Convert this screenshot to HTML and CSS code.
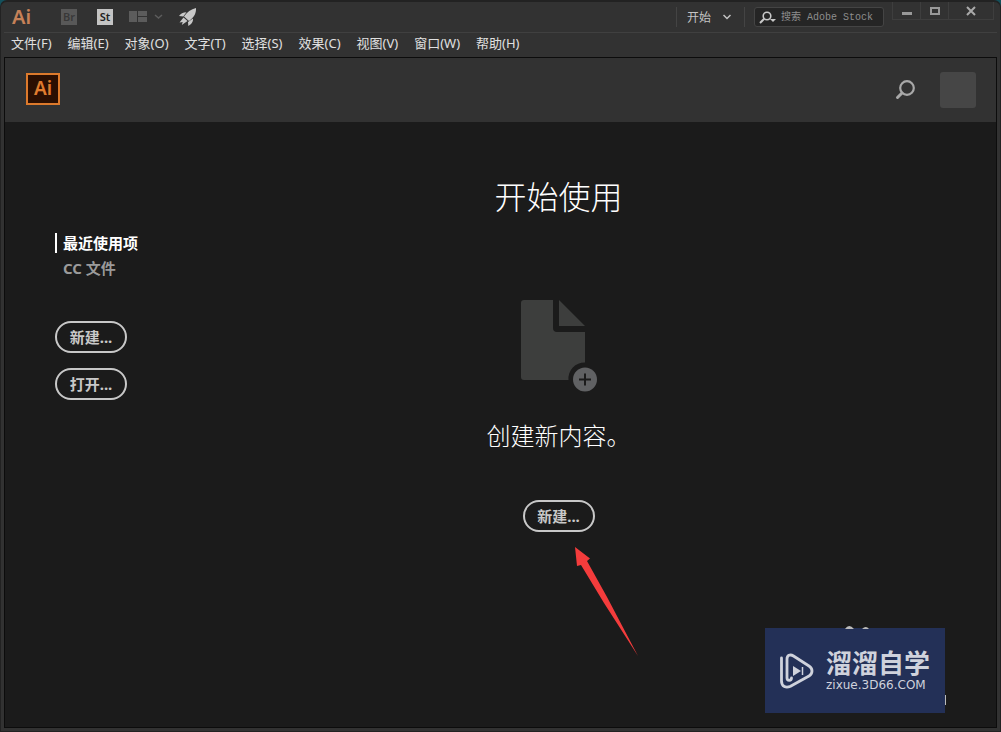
FILE: index.html
```html
<!DOCTYPE html>
<html lang="zh-CN">
<head>
  <meta charset="UTF-8">
  <title>Ai</title>
  <meta name="viewport" content="width=device-width, initial-scale=1.0">
  <link rel="stylesheet" href="styles.css">
</head>
<body>

<div class="window">

  <!-- Title bar -->
  <header class="titlebar">
    <span class="app-name">Ai</span>
    <button class="bridge" disabled>Br</button>
    <button class="stock">St</button>
    <button class="arrange" aria-label="排列文档">
      <svg width="34" height="12" viewBox="0 0 34 12">
        <path fill="#5c5c5c" d="M0 0h8v11H0zM9 0h9v5H9zM9 6h9v5H9z"/>
        <path fill="none" stroke="#5c5c5c" stroke-width="1.5" d="M26 4l3.500 3 3.500-3"/>
      </svg>
    </button>
    <button class="rocket" aria-label="GPU 性能">
      <svg width="18" height="18" viewBox="0 0 18 18">
        <path fill="#c8c8c8" d="M17 0c.3 5-1.600 9-7 13L5 8.500C8 4 12 1.200 17 0zM7.500 4.200L4.300 8.500 0 8C1.500 5.600 4 4.200 7.500 4.200zM14 10.500c.4 3-1.500 6-4.700 7.500l-.3-4zM4.500 9.500l4 3.500-5.700 4 .9-3-3.200.6z"/>
      </svg>
    </button>

    <button class="workspace">
      开始
      <svg width="8" height="6" viewBox="0 0 8 6"><path fill="none" stroke="#c4c4c4" stroke-width="1.500" d="M.5 1L4 4.500 7.500 1"/></svg>
    </button>
    <label class="stock-search">
      <svg width="18" height="13" viewBox="0 0 18 13">
        <circle cx="8" cy="5" r="3.800" fill="none" stroke="#c8c8c8" stroke-width="1.600"/>
        <path stroke="#c8c8c8" stroke-width="2" d="M5.200 7.800L1 12"/>
        <path fill="#c8c8c8" d="M11 8h6l-3 3z"/>
      </svg>
      <input type="text" placeholder="搜索 Adobe Stock" aria-label="搜索 Adobe Stock">
    </label>
    <div class="window-controls">
      <button aria-label="最小化"><svg width="10" height="10" viewBox="0 0 10 10"><path fill="#999" d="M0 6h10v3H0z"/></svg></button>
      <button aria-label="最大化"><svg width="10" height="10" viewBox="0 0 10 10"><path fill="none" stroke="#999" stroke-width="2" d="M1 2h8v6H1z"/></svg></button>
      <button class="close" aria-label="关闭"><svg width="10" height="10" viewBox="0 0 10 10"><path stroke="#aaa" stroke-width="2" d="M1 1l8 8M9 1L1 9"/></svg></button>
    </div>
  </header>

  <!-- Menu bar -->
  <nav class="menubar">
    <button>文件(F)</button>
    <button>编辑(E)</button>
    <button>对象(O)</button>
    <button>文字(T)</button>
    <button>选择(S)</button>
    <button>效果(C)</button>
    <button>视图(V)</button>
    <button>窗口(W)</button>
    <button>帮助(H)</button>
  </nav>

  <!-- Start workspace -->
  <div class="frame">
    <div class="topbar">
      <span class="logo">Ai</span>
      <button class="search" aria-label="搜索">
        <svg width="20" height="20" viewBox="0 0 20 20">
          <circle cx="12" cy="8" r="6.800" fill="none" stroke="#a8a8a8" stroke-width="2.200"/>
          <path stroke="#a8a8a8" stroke-width="3" stroke-linecap="round" d="M7 13l-4.500 4.500"/>
        </svg>
      </button>
      <button class="avatar" aria-label="帐户"></button>
    </div>

    <div class="content">
      <aside class="sidebar">
        <a href="#" class="tab active">最近使用项</a>
        <a href="#" class="tab">CC 文件</a>
        <div class="actions">
          <button class="pill">新建...</button>
          <button class="pill">打开...</button>
        </div>
      </aside>

      <main class="start">
        <h1>开始使用</h1>
        <svg class="new-file" width="76" height="92" viewBox="0 0 76 92">
          <path fill="#3d3e3d" d="M3 0h29v28q0 4 4 4h28v30.500A16 16 0 0 0 47.500 80H3q-3 0-3-3V3q0-3 3-3z"/>
          <path fill="#3d3e3d" d="M38 0l26 26H38z"/>
          <circle cx="64" cy="79.500" r="12" fill="#606163"/>
          <path stroke="#1b1b1b" stroke-width="2" d="M64 73.500v12M58 79.500h12"/>
        </svg>
        <p>创建新内容。</p>
        <div class="create">
          <button class="pill">新建...</button>
          <svg class="pointer" width="64" height="110" viewBox="0 0 64 110">
            <path fill="#f43c3c" d="M0 0l15 11.500-3 2.500 20 36 31 59-34-53L6 18l-4 1z"/>
          </svg>
        </div>
      </main>
    </div>
  </div>

  <div class="watermark">
    <svg width="34" height="36" viewBox="0 0 34 36">
      <path fill="none" stroke="#cfd2dc" stroke-width="2.800" stroke-linecap="round" stroke-linejoin="round" d="M1.500 5v23c0 5.500 4.500 7.500 9 5.200l18.500-10.200c4-2.500 4-7.500 0-10L13.500 3C10 .8 7 2.500 7 6v19c0 3 4.500 3 4.500 0"/>
      <path fill="#cfd2dc" d="M13 13l8 5-8 5z"/>
      <path stroke="#cfd2dc" stroke-width="1.500" d="M22.500 14v8"/>
    </svg>
    <div class="site">
      <strong>溜溜自学</strong>
      <span>zixue.3D66.COM</span>
    </div>
    <svg class="remnant" width="28" height="4" viewBox="0 0 28 4"><path fill="#bbb" d="M0 4q4-6 9 0zM17 4q4-4 7 0z"/></svg>
    <i class="edge"></i>
  </div>
</div>

</body>
</html>
```

FILE: styles.css
```css
* {
  box-sizing: border-box;
}

body {
  margin: 0;
  background: #14505c;
  color: #e0e0e0;
  font-family: "Noto Sans", "Noto Sans CJK SC", sans-serif;
  font-size: 12px;
}

button {
  margin: 0;
  padding: 0;
  border: none;
  background: none;
  color: inherit;
  font: inherit;
}

svg {
  display: block;
}

.window {
  position: relative;
  display: flex;
  flex-direction: column;
  min-height: 100vh;
  padding: 0 3px 3px;
  background: #323232;
  border: 1px solid #222;
  border-top-width: 2px;
  border-radius: 7px 7px 0 0;
}

/* Title bar */
.titlebar {
  display: flex;
  align-items: center;
  height: 31px;
  padding: 0 3px 0 8px;
  border-bottom: 1px solid #404040;
}

.app-name {
  width: 49px;
  color: #c58158;
  font-family: "Noto Sans", sans-serif;
  font-size: 20px;
  font-weight: 600;
  line-height: 24px;
}

.bridge,
.stock {
  width: 16px;
  height: 16px;
  background: #585858;
  color: #383838;
  font-size: 11px;
  font-weight: 600;
  line-height: 16px;
}

.stock {
  margin: 0 16px 0 20px;
  background: #c4c4c4;
  color: #222;
}

.rocket {
  margin-left: 16px;
}

.workspace {
  display: flex;
  align-items: center;
  gap: 12px;
  height: 20px;
  margin-left: auto;
  padding: 0 13px 0 10px;
  border-left: 1px solid #444;
  border-right: 1px solid #444;
  color: #c4c4c4;
}

.stock-search {
  display: flex;
  align-items: center;
  width: 130px;
  height: 20px;
  margin: 0 8px 0 9px;
  padding-left: 4px;
  background: #252525;
  border: 1px solid #444;
  border-radius: 3px;
}

.stock-search input {
  flex: 1;
  min-width: 0;
  height: 16px;
  padding: 0 0 0 4px;
  border: none;
  outline: none;
  background: none;
  color: #c4c4c4;
  font-family: "Liberation Mono", "Noto Sans CJK SC", monospace;
  font-size: 10px;
}

.stock-search input::placeholder {
  color: #8e8e8e;
}

.window-controls {
  display: flex;
  align-self: flex-start;
}

.window-controls button {
  display: flex;
  align-items: center;
  justify-content: center;
  width: 28px;
  height: 18px;
  border: 1px solid #3e3e3e;
  border-width: 0 0 1px 1px;
}

.window-controls .close {
  width: 46px;
  border-right-width: 1px;
}

/* Menu bar */
.menubar {
  display: flex;
  gap: 16px;
  height: 24px;
  padding: 0 7px 4px;
  font-size: 13px;
}

.menubar button {
  line-height: 16px;
  white-space: nowrap;
}

/* Start workspace */
.frame {
  display: flex;
  flex: 1;
  flex-direction: column;
  background: #1b1b1b;
  border: 1px solid #0c0c0c;
}

.topbar {
  display: flex;
  align-items: center;
  height: 64px;
  padding: 0 20px 0 21px;
  background: #323232;
}

.logo {
  width: 34px;
  height: 32px;
  margin: 0 auto 3px 0;
  background: #2b0f02;
  border: 2px solid #dd7a2c;
  color: #e07c2e;
  font-family: "Noto Sans", sans-serif;
  font-size: 19px;
  font-weight: 600;
  line-height: 27px;
  text-align: center;
}

.avatar {
  width: 36px;
  height: 36px;
  margin-left: 25px;
  background: #464646;
  border-radius: 3px;
}

.content {
  display: flex;
  flex: 1;
}

.sidebar {
  width: 136px;
  padding: 111px 0 0 50px;
}

.tab {
  display: block;
  height: 20px;
  margin-bottom: 5px;
  padding-left: 6px;
  border-left: 2px solid transparent;
  color: #9a9a9a;
  font-size: 15px;
  font-weight: 700;
  line-height: 20px;
  text-decoration: none;
  white-space: nowrap;
}

.tab.active {
  border-color: #fff;
  color: #fff;
}

.actions {
  display: flex;
  flex-direction: column;
  align-items: flex-start;
  gap: 15px;
  margin-top: 43px;
}

.pill {
  width: 72px;
  height: 32px;
  border: 2px solid #c8c8c8;
  border-radius: 16px;
  color: #c8c8c8;
  font-size: 15px;
  font-weight: 700;
  line-height: 24px;
}

.start {
  display: flex;
  flex: 1;
  flex-direction: column;
  align-items: center;
  padding: 51px 20px 20px 0;
  color: #fff;
}

h1 {
  margin: 0;
  font-size: 32px;
  font-weight: 300;
  line-height: 48px;
}

.new-file {
  margin: 79px 0 26px;
}

.start p {
  margin: 0;
  font-size: 24px;
  font-weight: 300;
  line-height: 36px;
}

.create {
  position: relative;
  margin-top: 46px;
}

.pointer {
  position: absolute;
  top: 47px;
  left: 52px;
}

/* Site mark */
.watermark {
  position: absolute;
  right: 55px;
  bottom: 18px;
  display: flex;
  align-items: center;
  gap: 12px;
  width: 180px;
  height: 85px;
  padding-left: 15px;
  background: #233057;
  color: #cfd2dc;
}

.site {
  display: flex;
  flex-direction: column;
  white-space: nowrap;
}

.site strong {
  font-size: 26px;
  font-weight: 700;
  line-height: 28px;
}

.site span {
  font-family: "DejaVu Sans", sans-serif;
  font-size: 12px;
  line-height: 16px;
}

.remnant {
  position: absolute;
  top: -3px;
  left: 80px;
}

.edge {
  position: absolute;
  right: -1px;
  bottom: 8px;
  width: 1px;
  height: 10px;
  background: #bbb;
}
```
